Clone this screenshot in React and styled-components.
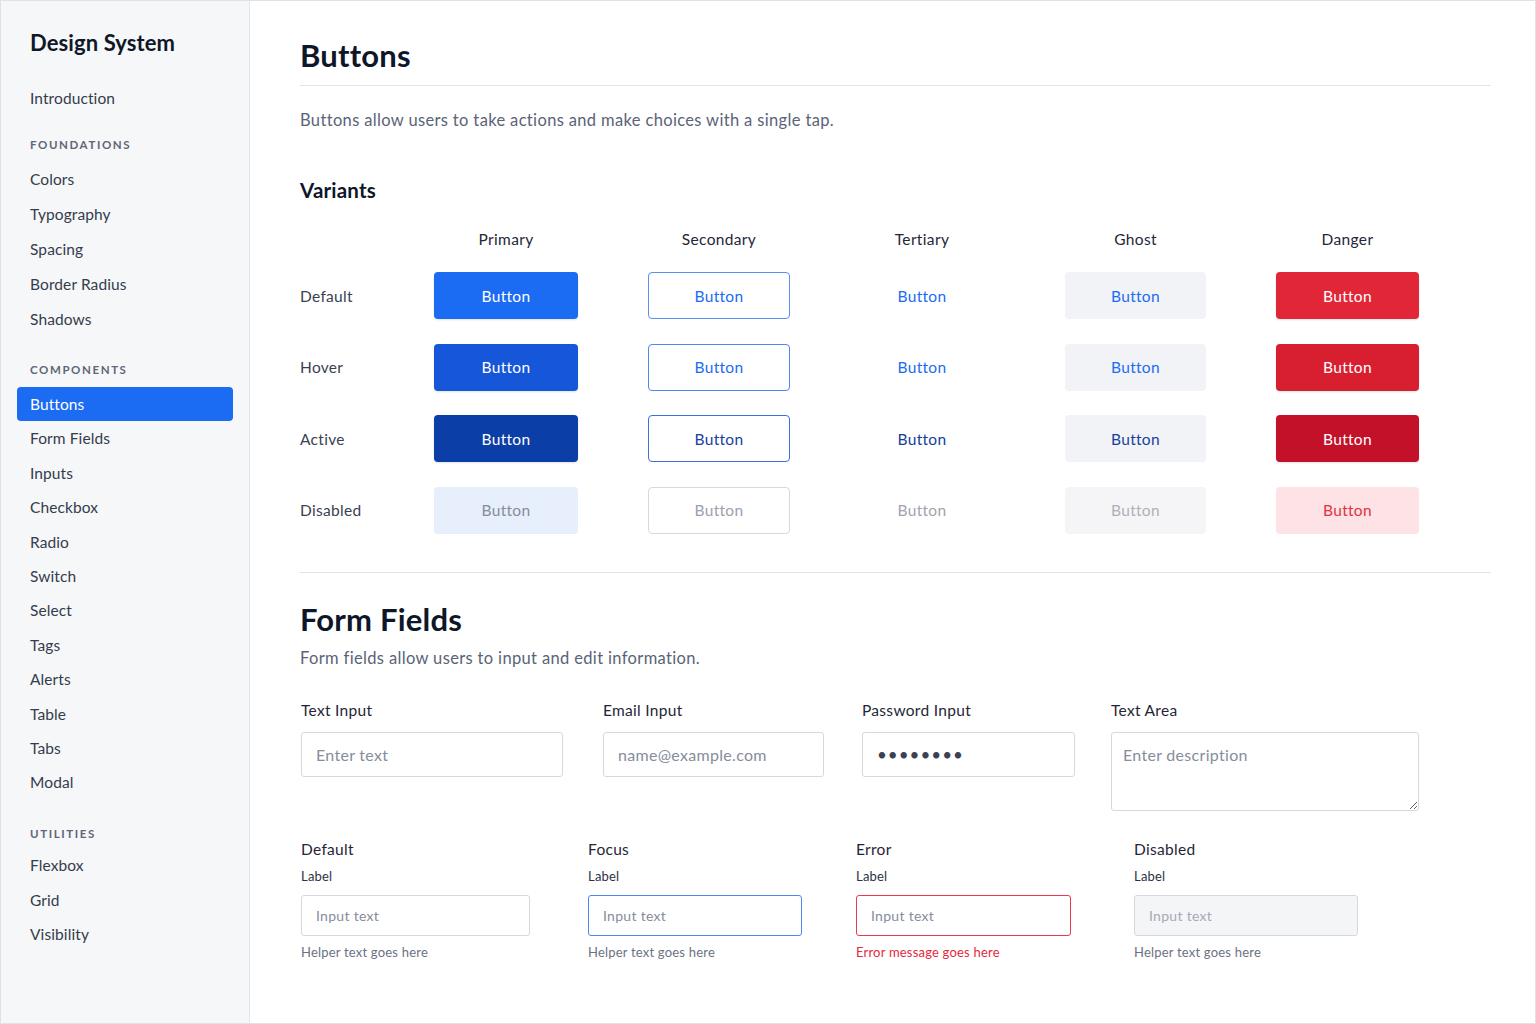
import React from 'react';
import styled, { createGlobalStyle } from 'styled-components';

const GlobalStyle = createGlobalStyle`
  html, body {
    margin: 0;
    padding: 0;
    background: #ffffff;
  }
  body {
    font-family: Lato, "Noto Sans", "Liberation Sans", sans-serif;
    color: #1f2937;
    -webkit-font-smoothing: antialiased;
  }
  * {
    box-sizing: border-box;
  }
`;

const Frame = styled.div`
  width: 1536px;
  height: 1024px;
  display: flex;
  border: 1px solid #dfe2e6;
  overflow: hidden;
`;

const Sidebar = styled.aside`
  width: 249px;
  flex-shrink: 0;
  background: #f6f7f9;
  border-right: 1px solid #e1e4e8;
  padding: 28px 16px 0 16px;
`;

const Brand = styled.div`
  font-size: 22px;
  line-height: 28px;
  font-weight: 700;
  letter-spacing: 0.1px;
  color: #101828;
  padding-left: 13px;
  margin-bottom: 24px;
`;

const NavSection = styled.div`
  font-size: 11.5px;
  line-height: 16px;
  font-weight: 700;
  letter-spacing: 1.6px;
  text-transform: uppercase;
  color: #5f6675;
  padding-left: 13px;
  margin: ${(p) => p.top}px 0 ${(p) => p.bottom}px;
`;

const NavItem = styled.div`
  height: ${(p) => p.h || 34.4}px;
  display: flex;
  align-items: center;
  padding-left: 13px;
  border-radius: 4px;
  font-size: 15.5px;
  letter-spacing: 0.1px;
  color: ${(p) => (p.active ? '#ffffff' : '#353c4c')};
  background: ${(p) => (p.active ? '#1b6cf2' : 'transparent')};
`;

const Main = styled.main`
  flex: 1;
  padding: 35px 44px 0 50px;
`;

const PageTitle = styled.h1`
  margin: 0;
  font-size: 31px;
  line-height: 38px;
  font-weight: 700;
  letter-spacing: 0.2px;
  color: #0e1629;
  padding-bottom: 11px;
  border-bottom: 1px solid #e2e4e8;
`;

const Lead = styled.p`
  margin: ${(p) => p.top || '22px'} 0 0;
  font-size: 16.5px;
  line-height: 24px;
  letter-spacing: 0.35px;
  color: #5a6377;
`;

const SubTitle = styled.h2`
  margin: 44px 0 0;
  font-size: 20.5px;
  line-height: 28px;
  font-weight: 700;
  letter-spacing: 0.2px;
  color: #0e1629;
`;

const VariantGrid = styled.div`
  display: grid;
  grid-template-columns: 101px 210px 216px 190px 237px 187px;
  row-gap: 24.5px;
  align-items: center;
  margin-top: 24px;
  padding-bottom: 38px;
  border-bottom: 1px solid #e2e4e8;
`;

const ColHead = styled.div`
  text-align: center;
  font-size: 15.5px;
  line-height: 22px;
  letter-spacing: 0.35px;
  color: #1f2636;
  margin-bottom: -2.5px;
`;

const RowLabel = styled.div`
  font-size: 15.5px;
  letter-spacing: 0.3px;
  color: #3a4151;
`;

const Cell = styled.div`
  display: flex;
  justify-content: center;
`;

const palette = {
  primary: {
    default: { bg: '#1b6cf2', fg: '#fff', border: 'transparent' },
    hover: { bg: '#1656d8', fg: '#fff', border: 'transparent' },
    active: { bg: '#0b3ea6', fg: '#fff', border: 'transparent' },
    disabled: { bg: '#e7eefc', fg: '#848ca0', border: 'transparent' },
  },
  secondary: {
    default: { bg: '#fff', fg: '#1b6cf2', border: '#5b8ff3' },
    hover: { bg: '#fff', fg: '#1b6cf2', border: '#4f86f1' },
    active: { bg: '#fff', fg: '#163fa0', border: '#3d70dc' },
    disabled: { bg: '#fff', fg: '#9ba1ad', border: '#d6d9df' },
  },
  tertiary: {
    default: { bg: 'transparent', fg: '#1b6cf2', border: 'transparent' },
    hover: { bg: 'transparent', fg: '#1b6cf2', border: 'transparent' },
    active: { bg: 'transparent', fg: '#143d9e', border: 'transparent' },
    disabled: { bg: 'transparent', fg: '#9fa4ae', border: 'transparent' },
  },
  ghost: {
    default: { bg: '#f2f3f7', fg: '#1b6cf2', border: 'transparent' },
    hover: { bg: '#f2f3f7', fg: '#1b6cf2', border: 'transparent' },
    active: { bg: '#f2f3f7', fg: '#163fa0', border: 'transparent' },
    disabled: { bg: '#f5f5f7', fg: '#adb1ba', border: 'transparent' },
  },
  danger: {
    default: { bg: '#e12737', fg: '#fff', border: 'transparent' },
    hover: { bg: '#d81f2f', fg: '#fff', border: 'transparent' },
    active: { bg: '#c3112a', fg: '#fff', border: 'transparent' },
    disabled: { bg: '#fde3e6', fg: '#e2323f', border: 'transparent' },
  },
};

const Btn = styled.button`
  width: ${(p) => p.w}px;
  height: 47px;
  border-radius: 4px;
  font-family: inherit;
  font-size: 15.5px;
  letter-spacing: 0.3px;
  cursor: pointer;
  background: ${(p) => palette[p.variant][p.state].bg};
  color: ${(p) => palette[p.variant][p.state].fg};
  border: 1px solid ${(p) => palette[p.variant][p.state].border};
  box-shadow: ${(p) =>
    (p.variant === 'primary' || p.variant === 'danger') && p.state !== 'disabled'
      ? '0 1px 2px rgba(16, 24, 40, 0.12)'
      : 'none'};
`;

const SectionTitle = styled.h2`
  margin: 27px 0 0;
  font-size: 31px;
  line-height: 38px;
  font-weight: 700;
  letter-spacing: 0.2px;
  color: #0e1629;
`;

const FieldRow = styled.div`
  display: grid;
  grid-template-columns: ${(p) => p.cols};
  align-items: start;
  margin-top: ${(p) => p.top};
  padding-left: 1px;
`;

const Field = styled.div`
  width: ${(p) => p.w}px;
  display: flex;
  flex-direction: column;
`;

const FieldLabel = styled.label`
  font-size: 15.5px;
  line-height: 22px;
  letter-spacing: 0.3px;
  color: #1f2636;
  margin-bottom: 11px;
`;

const StateTitle = styled.div`
  font-size: 15.5px;
  line-height: 22px;
  letter-spacing: 0.3px;
  color: #1f2636;
  margin-bottom: 7px;
`;

const SmallLabel = styled.label`
  font-size: 13px;
  line-height: 18px;
  letter-spacing: 0.2px;
  color: #2c3342;
  margin-bottom: 10px;
`;

const TextBox = styled.input`
  width: 100%;
  height: ${(p) => (p.small ? '41px' : '45px')};
  padding: 0 14px;
  border-radius: 3px;
  font-family: inherit;
  font-size: ${(p) => (p.small ? '14px' : '16px')};
  letter-spacing: 0.3px;
  color: #333a4a;
  outline: none;
  background: ${(p) => (p.disabled ? '#f4f5f7' : '#ffffff')};
  border: 1px solid
    ${(p) => (p.tone === 'focus' ? '#4d87f1' : p.tone === 'error' ? '#ea3a4b' : '#d5d8de')};
  &::placeholder {
    color: ${(p) => (p.disabled ? '#a5aab4' : '#868d9c')};
  }
  &[type='password'] {
    font-size: 17px;
    letter-spacing: 1px;
    color: #3a4152;
  }
`;

const TextArea = styled.textarea`
  width: 100%;
  height: 79px;
  padding: 12px 11px;
  border-radius: 3px;
  border: 1px solid #d5d8de;
  font-family: inherit;
  font-size: 16px;
  line-height: 20px;
  letter-spacing: 0.3px;
  outline: none;
  resize: both;
  &::placeholder {
    color: #868d9c;
  }
`;

const Helper = styled.div`
  margin-top: 7px;
  font-size: 13px;
  line-height: 18px;
  letter-spacing: 0.2px;
  color: ${(p) => (p.error ? '#e42a3c' : '#6b7282')};
`;

const nav = {
  foundations: ['Colors', 'Typography', 'Spacing', 'Border Radius', 'Shadows'],
  components: [
    'Buttons',
    'Form Fields',
    'Inputs',
    'Checkbox',
    'Radio',
    'Switch',
    'Select',
    'Tags',
    'Alerts',
    'Table',
    'Tabs',
    'Modal',
  ],
  utilities: ['Flexbox', 'Grid', 'Visibility'],
};

const variants = [
  { key: 'primary', label: 'Primary', w: 144 },
  { key: 'secondary', label: 'Secondary', w: 142 },
  { key: 'tertiary', label: 'Tertiary', w: 142 },
  { key: 'ghost', label: 'Ghost', w: 141 },
  { key: 'danger', label: 'Danger', w: 143 },
];

const states = [
  { key: 'default', label: 'Default' },
  { key: 'hover', label: 'Hover' },
  { key: 'active', label: 'Active' },
  { key: 'disabled', label: 'Disabled' },
];

const fieldStates = [
  { title: 'Default', w: 229, helper: 'Helper text goes here' },
  { title: 'Focus', w: 214, tone: 'focus', helper: 'Helper text goes here' },
  { title: 'Error', w: 215, tone: 'error', helper: 'Error message goes here', error: true },
  { title: 'Disabled', w: 224, disabled: true, helper: 'Helper text goes here' },
];

function App() {
  return (
    <>
      <GlobalStyle />
      <Frame>
        <Sidebar>
          <Brand>Design System</Brand>
          <NavItem>Introduction</NavItem>

          <NavSection top={22} bottom={8}>Foundations</NavSection>
          {nav.foundations.map((item) => (
            <NavItem key={item} h={35}>
              {item}
            </NavItem>
          ))}

          <NavSection top={25.5} bottom={9}>Components</NavSection>
          {nav.components.map((item) => (
            <NavItem key={item} active={item === 'Buttons'}>
              {item}
            </NavItem>
          ))}

          <NavSection top={26} bottom={6.5}>Utilities</NavSection>
          {nav.utilities.map((item) => (
            <NavItem key={item}>{item}</NavItem>
          ))}
        </Sidebar>

        <Main>
          <PageTitle>Buttons</PageTitle>
          <Lead>Buttons allow users to take actions and make choices with a single tap.</Lead>

          <SubTitle>Variants</SubTitle>
          <VariantGrid>
            <div />
            {variants.map((v) => (
              <ColHead key={v.key}>{v.label}</ColHead>
            ))}
            {states.map((s) => (
              <React.Fragment key={s.key}>
                <RowLabel>{s.label}</RowLabel>
                {variants.map((v) => (
                  <Cell key={v.key}>
                    <Btn variant={v.key} state={s.key} w={v.w}>
                      Button
                    </Btn>
                  </Cell>
                ))}
              </React.Fragment>
            ))}
          </VariantGrid>

          <SectionTitle>Form Fields</SectionTitle>
          <Lead top="8px">Form fields allow users to input and edit information.</Lead>

          <FieldRow cols="302px 259px 249px 308px" top="29px">
            <Field w={262}>
              <FieldLabel>Text Input</FieldLabel>
              <TextBox placeholder="Enter text" />
            </Field>
            <Field w={221}>
              <FieldLabel>Email Input</FieldLabel>
              <TextBox placeholder="name@example.com" />
            </Field>
            <Field w={213}>
              <FieldLabel>Password Input</FieldLabel>
              <TextBox type="password" defaultValue="password" />
            </Field>
            <Field w={308}>
              <FieldLabel>Text Area</FieldLabel>
              <TextArea placeholder="Enter description" />
            </Field>
          </FieldRow>

          <FieldRow cols="287px 268px 278px 224px" top="27px">
            {fieldStates.map((f) => (
              <Field key={f.title} w={f.w}>
                <StateTitle>{f.title}</StateTitle>
                <SmallLabel>Label</SmallLabel>
                <TextBox small placeholder="Input text" tone={f.tone} disabled={f.disabled} />
                <Helper error={f.error}>{f.helper}</Helper>
              </Field>
            ))}
          </FieldRow>
        </Main>
      </Frame>
    </>
  );
}

export default App;
